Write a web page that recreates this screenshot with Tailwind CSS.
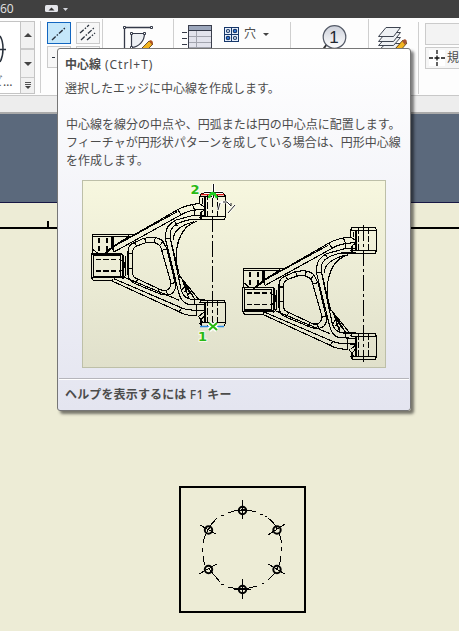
<!DOCTYPE html>
<html lang="ja">
<head>
<meta charset="utf-8">
<title>中心線</title>
<script src="https://cdn.jsdelivr.net/npm/@tailwindcss/browser@4"></script>
</head>
<body class="relative flex h-[631px] w-[459px] flex-col overflow-hidden bg-[#edecd6] font-['Noto_Sans','Noto_Sans_CJK_JP',sans-serif] text-[#4c4c4c]">

<!-- title bar -->
<header class="flex h-[18px] shrink-0 items-center bg-[#404040] text-[12px] leading-[18px] text-[#e4e4e4]">
  <span class="w-[45px] font-['Open_Sans']">60</span>
  <svg class="h-[18px] w-[26px]" viewBox="0 0 26 18"><rect x="0" y="5" width="13" height="7" rx="1.5" fill="#e4e5ea"/><path d="M3.5 10.5 6.5 7.5 9.500 10.500z" fill="#333"/><path d="M18 8h5l-2.500 3z" fill="#d4d6dd"/></svg>
</header>

<!-- ribbon -->
<section class="flex h-[77px] shrink-0 items-start overflow-hidden bg-[#fdfdfd] *:shrink-0">
  <div class="mt-[3px] flex h-[73px] w-[35px] border-y border-[#c4c4c4] bg-white">
    <div class="w-5 shrink-0">
      <svg class="h-[52px] w-5" viewBox="0 0 20 52"><path d="M0 14C4 20 4 33 0 40M0 27.500H6" fill="none" stroke="#29313c" stroke-width="1.5"/></svg>
      <span class="-ml-[9px] block whitespace-nowrap text-[12px] leading-[16px]">ビ…</span>
    </div>
    <div class="flex w-[15px] flex-col border-x border-[#c4c4c4] bg-[#f1f1f1]">
      <span class="flex h-7 items-center justify-center border-b-2 border-[#cacaca]"><svg class="h-1 w-2" viewBox="0 0 8 4"><path d="M0 4 4 0 8 4z" fill="#444"/></svg></span>
      <span class="flex h-7 items-center justify-center border-b border-[#cacaca]"><svg class="h-1 w-2" viewBox="0 0 8 4"><path d="M0 0H8L4 4z" fill="#444"/></svg></span>
      <span class="flex flex-1 items-center justify-center"><svg class="h-[7px] w-[6px]" viewBox="0 0 6 7"><path d="M0 .5H6M0 2.500H6" stroke="#555"/><path d="M0 4H6L3 7z" fill="#444"/></svg></span>
    </div>
  </div>
  <div class="ml-[5px] mt-[3px] h-[72px] w-px bg-[#cfcfcf]"></div>
  <div class="ml-[6px] mt-1 grid grid-cols-[24px_24px] grid-rows-[22px_22px] gap-x-[5px] gap-y-[2px]">
    <span class="border border-[#1266c0] bg-[#c5e7fa]"><svg class="h-5 w-[22px]" viewBox="0 0 22 20"><path d="M4 17 18 4" stroke="#29313c" stroke-width="1.4" stroke-dasharray="5 1.500 1.500 1.500"/></svg></span>
    <span class="border border-[#cbcbcb] bg-[#f7f7f7]"><svg class="h-5 w-[22px]" viewBox="0 0 22 20"><path d="M3 10 12 2M4 17 18 4M10 17 18 10" stroke="#29313c" stroke-width="1.3" stroke-dasharray="5 1.500 1.500 1.500"/></svg></span>
    <span class="border border-[#cbcbcb] bg-[#f7f7f7]"><svg class="h-5 w-[22px]" viewBox="0 0 22 20"><path d="M4 10.500H7M9 10.500H14M11.500 3V18" stroke="#29313c"/></svg></span>
    <span class="border border-[#cbcbcb] bg-[#f7f7f7]"></span>
  </div>
  <div class="ml-[2px] mt-px h-[74px] w-px bg-[#cfcfcf]"></div>
  <svg class="ml-[20px] mt-1 h-[34px] w-[34px]" viewBox="123 22 34 34">
    <path d="M124.500 56V27.500H152" fill="none" stroke="#353a49" stroke-width="1.3"/>
    <path d="M131.500 48V33.500H144.500C144.500 41 139 47 131.500 47.500" fill="#edf0f4" stroke="#353a49" stroke-width="1.2"/>
    <g fill="#fff" stroke="#353a49"><path d="M123.500 26.500h2v2h-2zM150.500 26.500h2v2h-2zM130.500 32.500h2v2h-2zM143.500 32.500h2v2h-2zM130.500 46.500h2v2h-2z"/></g>
    <path d="M142 48 149 41 153 44 147 50z" fill="#f3b51f" stroke="#4d3317" stroke-width=".8"/><path d="M149 41 151 40 153 42 152 45z" fill="#b05221"/>
  </svg>
  <div class="ml-[16px] mt-px h-[74px] w-px bg-[#cfcfcf]"></div>
  <svg class="ml-[8px] mt-[6px] h-[34px] w-[31px]" viewBox="182 24 31 34">
    <rect x="188.500" y="25.500" width="23" height="33" fill="#e2e3ec" stroke="#3b3f4d"/><path d="M189 26h22v4h-22z" fill="#9ba6bb"/>
    <path d="M188 30.500h24" stroke="#343947"/><path d="M196.500 31v27M189 36.500h22M189 42.500h22M189 47.500h22" stroke="#a2a4ae"/><path d="M182 32.500h5M182 38.500h5M182 44.500h5" stroke="#343947"/>
  </svg>
  <div class="ml-[11px] mt-[7px] flex h-[18px] items-center">
    <svg class="h-[15px] w-[15px]" viewBox="0 0 15 15"><rect x=".5" y=".5" width="14" height="14" fill="#e8f0fc" stroke="#17386b"/><path d="M7.500 0v15M0 7.500h15" stroke="#17386b"/><g fill="#fff" stroke="#17386b" stroke-width="1.2"><circle cx="4" cy="4" r="1.5"/><circle cx="11" cy="4" r="1.7" fill="#3580ed"/><circle cx="4" cy="11" r="1.7" fill="#3580ed"/><circle cx="11" cy="11" r="1.5"/></g></svg>
    <span class="ml-[5px] text-[12px] leading-4">穴</span>
    <svg class="ml-[7px] h-[3px] w-[6px]" viewBox="0 0 6 3"><path d="M0 0H6L3 3z" fill="#444"/></svg>
  </div>
  <div class="ml-[21px] mt-1 h-[71px] w-px bg-[#cfcfcf]"></div>
  <svg class="ml-[31px] mt-[6px] h-[30px] w-[25px]" viewBox="0 0 25 30"><defs><linearGradient id="ball" x2="0" y2="1"><stop stop-color="#ccd0da"/><stop offset="1" stop-color="#fff"/></linearGradient></defs><path d="M5 20 0 27" stroke="#333" stroke-width="2"/><circle cx="12.500" cy="13" r="11.300" fill="url(#ball)" stroke="#535966" stroke-width="1.200"/><text x="12" y="19" text-anchor="middle" font-family="Liberation Sans" font-size="17" fill="#222831">1</text></svg>
  <div class="ml-[21px] mt-px h-[74px] w-px bg-[#cfcfcf]"></div>
  <svg class="ml-[9px] mt-2 h-[30px] w-[31px]" viewBox="378 26 31 30">
    <g fill="#eef1f4" stroke="#3e4551"><path d="M378.500 50.500 386 43.500H400.500L393.500 50.500z"/><path d="M378.500 45.500 386 37.500H400.500L393.500 45.500z"/><path d="M378.500 41.500 386 32.500H400.500L393.500 41.500z"/><path d="M378.500 36.500 386 27.500H400.500L393.500 36.500z"/></g>
    <path d="M395 49 403 40 407 43 400 51z" fill="#f3b51f" stroke="#4d3317" stroke-width=".8"/><path d="M402 41 405 39 407 41 405 45z" fill="#a65332"/>
  </svg>
  <div class="ml-[9px] mt-1 h-[72px] w-px bg-[#cfcfcf]"></div>
  <div class="ml-[6px] mt-[5px] flex w-[40px] flex-col gap-[2px]">
    <div class="h-[22px] border border-[#cbcbcb] bg-[#f3f3f3]"></div>
    <div class="flex h-[22px] items-center border border-[#cbcbcb] bg-[#f6f6f6] whitespace-nowrap text-[12px] leading-5"><svg class="ml-[3px] h-4 w-4 shrink-0 bg-white" viewBox="0 0 16 16"><path d="M0 8H4M5.500 8h5M12 8h4M8 0V4M8 5.500v5M8 12v4" stroke="#111" stroke-width="1.300"/></svg><span class="ml-[2px]">規</span></div>
  </div>
</section>
<div class="h-[19px] shrink-0 border-b-2 border-t border-b-[#aaa] border-t-[#c8c8c8] bg-[#ededed]"></div>
<div class="h-[89px] shrink-0 border-b border-[#171744] bg-[#5b697c]"></div>

<!-- drawing sheet -->
<svg class="h-[428px] w-[459px] shrink-0" viewBox="0 203 459 428" fill="none" stroke="#000">
  <path d="M0 228H459M48 221V228" stroke-width="2" shape-rendering="crispEdges"/>
  <rect x="180" y="487" width="125" height="125" stroke-width="2" shape-rendering="crispEdges"/>
  <g shape-rendering="crispEdges">
    <path d="M228 513Q242 507 256 512M260 514.500h3M265 516.500h2M268 518Q276 524 277 530M279 533Q282 540 281 543M281.500 547v4M281 556Q280 565 277 569M275 573 268 580M262 583.500h2M257 586Q243 591 228 587M221 584.500h3M220 582 209 569M205 565Q203 560 203 556M202.500 548v4M203 543Q204 536 208 530 211 524 217 518M221 515.500h3"/>
    <path d="M242.500 500v19M242.500 579v20M234 510.500h17M234 589.500h17M200 525 216 534M285 524 268 535M199 574 217 564M268 564 285 574"/>
  </g>
  <g stroke-width="2"><circle cx="242.500" cy="510.500" r="3.700"/><circle cx="242.500" cy="589.500" r="3.700"/><circle cx="208.500" cy="530" r="3.700"/><circle cx="277" cy="530" r="3.700"/><circle cx="208.500" cy="569.500" r="3.700"/><circle cx="277" cy="569.500" r="3.700"/></g>
</svg>

<!-- tooltip -->
<aside class="absolute left-[57px] top-[48px] flex h-[363px] w-[354px] flex-col rounded-[3px] border border-[#767676] bg-linear-to-b from-white to-[#e4e5f0] shadow-[3px_3px_3px_rgba(0,0,0,0.5)] whitespace-nowrap">
  <h1 class="ml-[7px] mt-[7px] flex h-[18px] items-center gap-[4px] leading-[18px]"><b class="text-[12px]">中心線</b><span class="text-[12px] tracking-[0.95px]">(Ctrl+T)</span></h1>
  <p class="ml-[7px] mt-[6px] h-[18px] text-[12px] leading-[18px]">選択したエッジに中心線を作成します。</p>
  <p class="ml-[8px] mt-[18px] text-[12px] leading-[18px]">中心線を線分の中点や、円弧または円の中心点に配置します。<br>フィーチャが円形状パターンを成している場合は、円形中心線<br>を作成します。</p>
  <svg class="ml-[24px] mt-[10px] h-[188px] w-[304px] shrink-0" viewBox="82 180 304 188" fill="none">
    <defs>
      <linearGradient id="paper" x2="0" y2="1"><stop stop-color="#f7f7df"/><stop offset="1" stop-color="#e0e0cb"/></linearGradient>
      <g id="arm" transform="scale(.33333)" stroke="#000" stroke-width="3.300" shape-rendering="crispEdges">
        <path d="M41 326V271H165M41 277H154M99 277V308M102 277V316M42 315 57 327"/>
        <path d="M60 281V325M84 281V325" stroke-dasharray="16 8" stroke-width="5"/>
        <path d="M44 328H124Q133 328 133 336V392Q133 400 124 400H38V326M44 334H124V396H44zM139 335V390Q139 400 128 403M126 348 138 355V368L126 380M38 400 44 409H98L103 402" />
        <path d="M38 328H130M44 328V398H130V330" stroke-width="4.500"/>
        <path d="M50 345H122M50 380H122" stroke-dasharray="16 7" stroke-width="5"/>
        <path d="M70 333 92 313 165 271 297 195Q325 180 362 177M82 326 104 306 294 202M104 323 306 211Q330 195 378 194M98 308 140 282 150 273M100 309 106 323M297 195 306 211M340 180 346 194V212"/>
        <path d="M378 212H345L290 227Q260 243 260 269V286L298 440Q305 473 326 479L378 481M378 225H335Q276 236 274 266V282L307 438Q315 463 340 465H378M287 231 295 244M260 283H275M275 285 303 400"/>
        <path d="M355 230Q290 250 291 350M348 233Q307 245 294 310M345 232Q282 248 283 286M301 393 360 466M308 400 330 463M311 407 349 466M316 422 345 460M308 438 316 426M317 443 328 430M324 454 337 440"/>
        <path d="M147 389V320Q147 302 164 295L193 282Q235 272 252 291L264 314 289 418Q292 438 277 448 261 455 240 447L165 416Q147 406 147 389zM160 383V325Q160 309 177 303L202 294Q232 289 245 307L276 416Q276 433 261 438H250L177 404Q160 399 160 383zM147 327H160M147 371H160M165 294 174 305M196 281 202 294M230 279 225 292M252 291 242 303M264 314 249 317M289 414 276 418M261 438 266 451M240 435 233 444M177 403 168 417"/>
        <path d="M98 409 301 502Q320 514 355 514M105 403 308 490Q326 499 378 498M138 399 300 467M308 490 301 502M352 480V514M346 465V481"/>
        <path d="M362 157 366 148H435L440 157V217L435 226H368L362 217M362 157H440M368 217H440M378 157V217M362 157V178L378 188M370 162V178M378 194 366 204V226"/><path d="M386 149V226M416 149V226" stroke-dasharray="19 6"/>
        <path d="M362 475 366 467H435L440 475V535L435 545H368L362 535M362 475H440M368 535H440M378 475V535M362 514 378 500M378 510 366 527V541M357 514 372 535"/><path d="M386 467V545M416 467V545" stroke-dasharray="19 6"/>
        <path d="M400 140V553" stroke-dasharray="48 9 9 9"/>
      </g>
    </defs>
    <rect x="82.500" y="180.500" width="303" height="187" fill="url(#paper)" stroke="#bdbfa8"/>
    <use href="#arm" x="230" y="178"/>
    <use href="#arm" x="79" y="144.500"/>
    <path d="M201 194.500H224" stroke="#e21b1b" stroke-width="1.500"/><path d="M204 192.500h19M213.500 184v14" stroke="#fff" stroke-width="3"/><path d="M204 192.500h19M213.500 184v14" stroke="#111"/><path d="M209 198Q212 188 217 198M210 194h6" stroke="#20d020" stroke-width="2.500"/>
    <path d="M218 210 220 203 223 202H227L231 206M229 202V206M228 213 235 205" stroke="#fff" stroke-width="2.500"/><path d="M218 210 220 203M223 202H227L231 206V203M228 213 235 205" stroke="#222"/>
    <path d="M200 326.500H224" stroke="#268ae4" stroke-width="1.500"/>
    <path d="M209 323 217 330M217 323 209 330" stroke="#fff" stroke-width="5"/><path d="M209 323 217 330M217 323 209 330" stroke="#28b914" stroke-width="2.200"/>
    <g font-family="DejaVu Sans" font-weight="bold" font-size="13" fill="#28b914" stroke="#f7f9e7" stroke-width="2" paint-order="stroke"><text x="190.500" y="194">2</text><text x="198" y="341">1</text></g>
  </svg>
  <div class="mx-px mt-[10px] h-[2px] shrink-0 border-b border-t border-b-white border-t-[#b5b5bb]"></div>
  <footer class="ml-[7px] mt-[6px] text-[12px] font-bold leading-[18px] tracking-[0.15px]">ヘルプを表示するには <span class="font-medium tracking-[0.5px]">F1</span> キー</footer>
</aside>
</body>
</html>
